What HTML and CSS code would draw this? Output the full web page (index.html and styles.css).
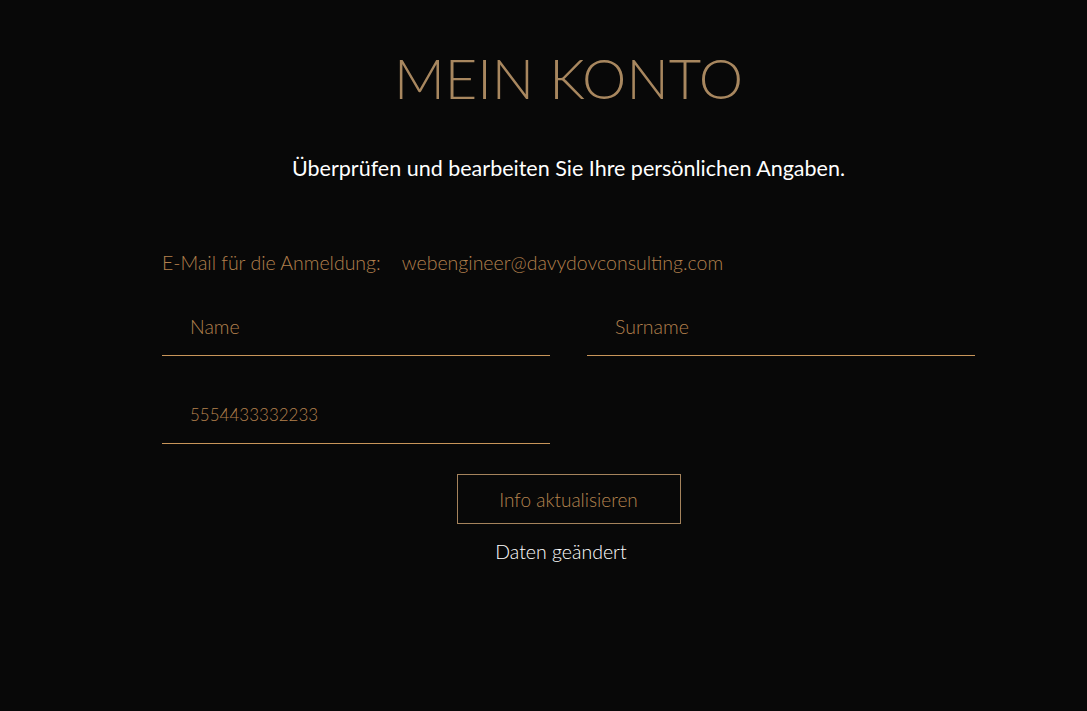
FILE: index.html
```html
<!DOCTYPE html>
<html lang="de">
<head>
    <meta charset="UTF-8">
    <meta name="viewport" content="width=device-width, initial-scale=1.0">
    <title>Mein Konto</title>
    <link rel="stylesheet" href="styles.css">
</head>
<body>
    <div class="account">
        <h1 class="title">MEIN KONTO</h1>
        <p class="subtitle">Überprüfen und bearbeiten Sie Ihre persönlichen Angaben.</p>

        <div class="login-row">
            <span class="login-label">E-Mail für die Anmeldung:</span>
            <span class="login-value">webengineer@davydovconsulting.com</span>
        </div>

        <div class="field-grid">
            <div class="field">
                <input type="text" placeholder="Name">
            </div>
            <div class="field">
                <input type="text" placeholder="Surname">
            </div>
            <div class="field">
                <input type="text" class="phone" value="5554433332233">
            </div>
        </div>

        <div class="actions">
            <button class="update-button">Info aktualisieren</button>
            <p class="status">Daten geändert</p>
        </div>
    </div>
</body>
</html>
```

FILE: styles.css
```css
html {
    background: #080808;
}

body {
    margin: 0;
    padding: 0 0 0 50px;
    background: #080808;
    font-family: Lato, "Noto Sans", sans-serif;
    min-height: 711px;
}

.account {
    width: 813px;
    margin: 0 auto;
    padding-top: 42px;
}

.title {
    margin: 0;
    text-align: center;
    font-size: 56px;
    font-weight: 300;
    color: #a8875f;
    line-height: 72px;
}

.subtitle {
    margin: 41px 0 0;
    text-align: center;
    color: #ffffff;
    font-size: 21.5px;
    line-height: 26px;
}

.login-row {
    margin-top: 71px;
    display: flex;
    gap: 21px;
    font-size: 19.5px;
    line-height: 22px;
    color: #b3804d;
    font-weight: 300;
}

.field-grid {
    margin-top: 24px;
    display: grid;
    grid-template-columns: 388px 388px;
    column-gap: 37px;
    row-gap: 30px;
}

.field input {
    width: 100%;
    box-sizing: border-box;
    background: transparent;
    border: none;
    border-bottom: 1px solid #c8955a;
    padding: 14px 0 14px 28px;
    font-family: Lato, "Noto Sans", sans-serif;
    font-size: 19.5px;
    font-weight: 300;
    line-height: 29px;
    height: 58px;
    color: #b3804d;
    outline: none;
}

.field input.phone {
    font-size: 17px;
}

.field input::placeholder {
    color: #b3804d;
    opacity: 1;
}

.actions {
    margin-top: 30px;
    display: flex;
    flex-direction: column;
    align-items: center;
}

.update-button {
    width: 224px;
    height: 50px;
    background: transparent;
    border: 1px solid #a5835c;
    color: #b5844f;
    font-family: Lato, "Noto Sans", sans-serif;
    font-size: 19px;
    font-weight: 300;
    cursor: pointer;
}

.status {
    margin: 15px 15px 0 0;
    color: #ffffff;
    font-size: 19.5px;
    font-weight: 300;
    line-height: 26px;
}
```
